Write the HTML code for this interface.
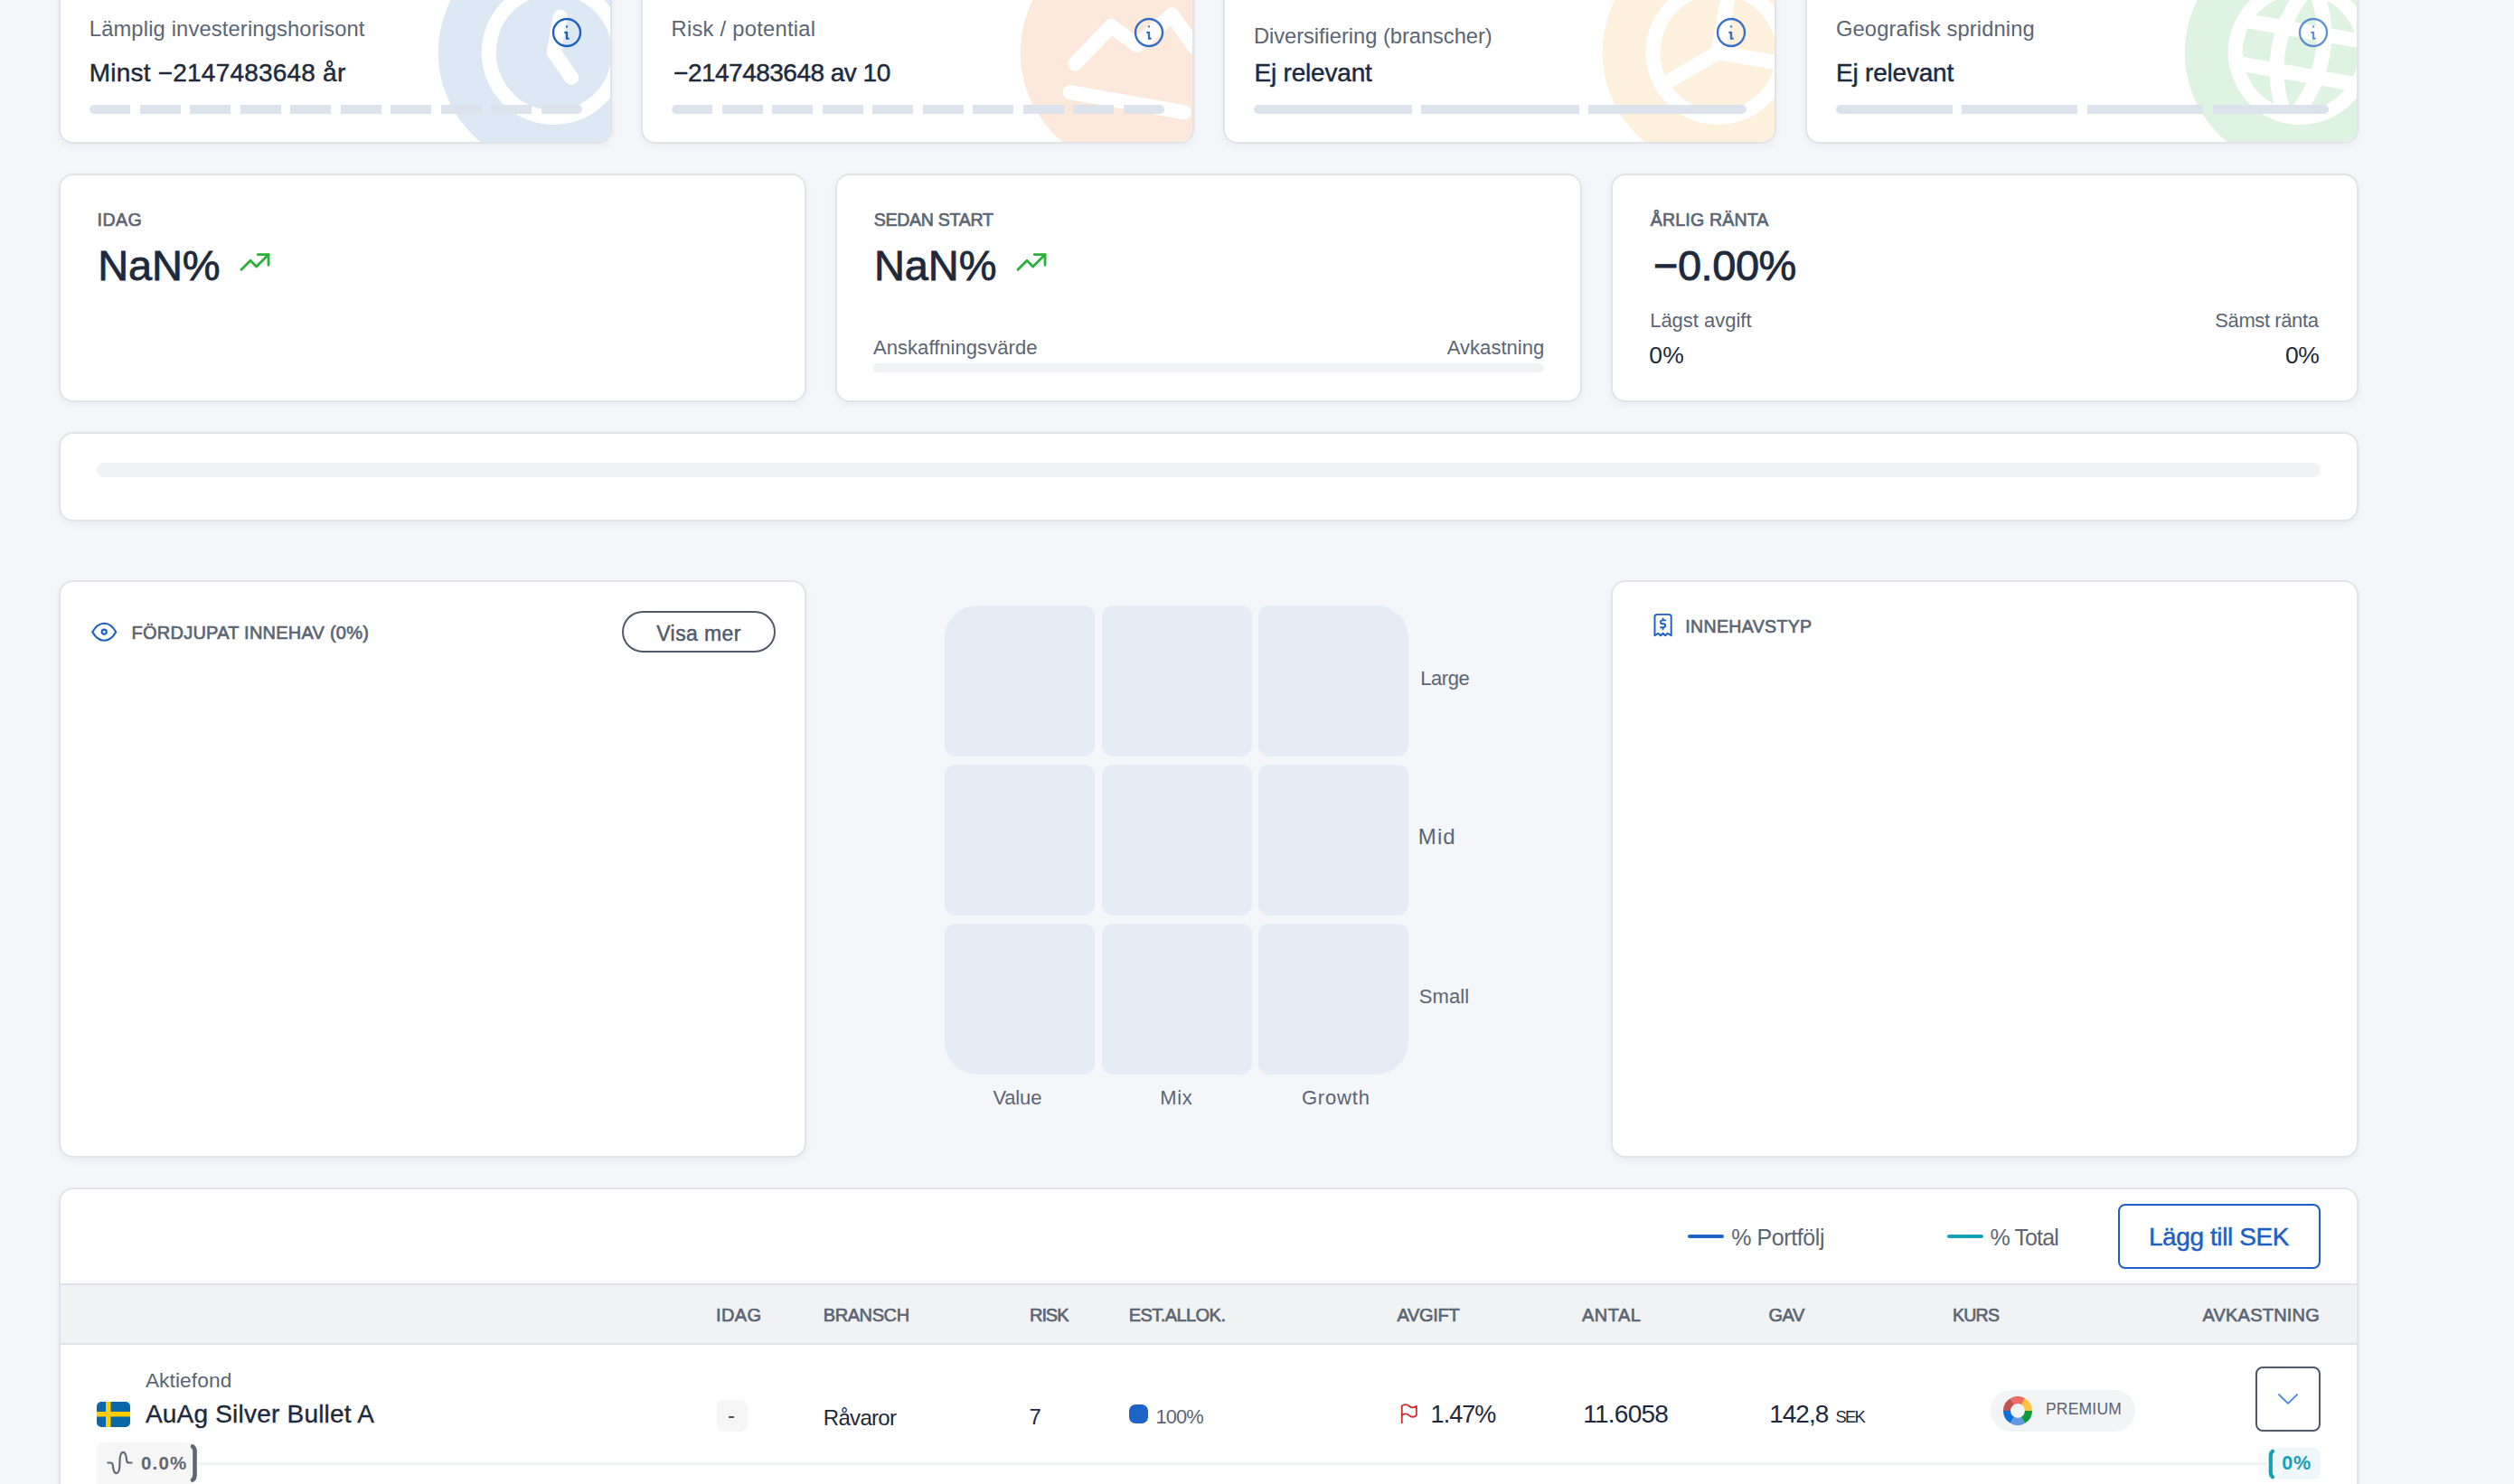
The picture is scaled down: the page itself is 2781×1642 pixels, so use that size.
<!DOCTYPE html>
<html><head><meta charset="utf-8"><style>
html,body{margin:0;padding:0;}
body{width:2781px;height:1642px;overflow:hidden;position:relative;background:#f4f6fa;font-family:"Liberation Sans",sans-serif;}
.t{position:absolute;line-height:1;white-space:nowrap;}
.b{position:absolute;}
.card{position:absolute;background:#fff;border:2px solid #e2e3e7;border-radius:16px;box-sizing:border-box;box-shadow:0 3px 9px rgba(30,45,70,0.05);}
.deco{position:absolute;left:-2px;top:-2px;}
</style></head><body>
<div class="card" style="left:65.00px;top:-30.00px;width:611.80px;height:189.10px;overflow:hidden"><svg class="deco" width="611.8" height="189.1" viewBox="0 0 611.8 189.1"><circle cx="547.7249999999999" cy="88" r="128" fill="#dde8f5"/><g transform="translate(547.7249999999999,88) rotate(10) scale(8) translate(-12,-12)" fill="none" stroke="#fff" stroke-width="2" stroke-linecap="round" stroke-linejoin="round"><circle cx="12" cy="12" r="9"/><path d="M12 7v5l3 3"/></g></svg></div>
<svg class="b" style="left:607.00px;top:15.80px;opacity:1.0" width="40" height="40" viewBox="0 0 24 24" fill="none" stroke="#1d5fc4" stroke-width="1.4" stroke-linecap="round" stroke-linejoin="round"><circle cx="12" cy="12" r="9"/><path d="M12 8.1h.01"/><path d="M11 12h1v4h1"/></svg>
<div class="b" style="left:99.3px;top:116px;width:45.02px;height:10.00px;background:#dde3ec;border-radius:5px 0 0 5px;"></div>
<div class="b" style="left:154.82px;top:116px;width:45.02px;height:10.00px;background:#dde3ec;"></div>
<div class="b" style="left:210.34px;top:116px;width:45.02px;height:10.00px;background:#dde3ec;"></div>
<div class="b" style="left:265.86px;top:116px;width:45.02px;height:10.00px;background:#dde3ec;"></div>
<div class="b" style="left:321.38px;top:116px;width:45.02px;height:10.00px;background:#dde3ec;"></div>
<div class="b" style="left:376.9px;top:116px;width:45.02px;height:10.00px;background:#dde3ec;"></div>
<div class="b" style="left:432.42px;top:116px;width:45.02px;height:10.00px;background:#dde3ec;"></div>
<div class="b" style="left:487.94px;top:116px;width:45.02px;height:10.00px;background:#dde3ec;"></div>
<div class="b" style="left:543.46px;top:116px;width:45.02px;height:10.00px;background:#dde3ec;"></div>
<div class="b" style="left:598.98px;top:116px;width:45.02px;height:10.00px;background:#dde3ec;border-radius:0 5px 5px 0;"></div>
<div class="card" style="left:709.00px;top:-30.00px;width:611.70px;height:189.10px;overflow:hidden"><svg class="deco" width="611.7" height="189.1" viewBox="0 0 611.7 189.1"><circle cx="547.625" cy="88" r="128" fill="#fde9dc"/><g transform="translate(547.625,88) rotate(10) scale(8) translate(-12,-12)" fill="none" stroke="#fff" stroke-width="2" stroke-linecap="round" stroke-linejoin="round"><path d="M4 19l16 0"/><path d="M4 15l4 -6l4 2l4 -5l4 4"/></g></svg></div>
<svg class="b" style="left:1250.80px;top:15.80px;opacity:0.9" width="40" height="40" viewBox="0 0 24 24" fill="none" stroke="#1d5fc4" stroke-width="1.4" stroke-linecap="round" stroke-linejoin="round"><circle cx="12" cy="12" r="9"/><path d="M12 8.1h.01"/><path d="M11 12h1v4h1"/></svg>
<div class="b" style="left:743.3px;top:116px;width:45.01px;height:10.00px;background:#dde3ec;border-radius:5px 0 0 5px;"></div>
<div class="b" style="left:798.81px;top:116px;width:45.01px;height:10.00px;background:#dde3ec;"></div>
<div class="b" style="left:854.32px;top:116px;width:45.01px;height:10.00px;background:#dde3ec;"></div>
<div class="b" style="left:909.83px;top:116px;width:45.01px;height:10.00px;background:#dde3ec;"></div>
<div class="b" style="left:965.34px;top:116px;width:45.01px;height:10.00px;background:#dde3ec;"></div>
<div class="b" style="left:1020.85px;top:116px;width:45.01px;height:10.00px;background:#dde3ec;"></div>
<div class="b" style="left:1076.36px;top:116px;width:45.01px;height:10.00px;background:#dde3ec;"></div>
<div class="b" style="left:1131.87px;top:116px;width:45.01px;height:10.00px;background:#dde3ec;"></div>
<div class="b" style="left:1187.38px;top:116px;width:45.01px;height:10.00px;background:#dde3ec;"></div>
<div class="b" style="left:1242.89px;top:116px;width:45.01px;height:10.00px;background:#dde3ec;border-radius:0 5px 5px 0;"></div>
<div class="card" style="left:1353.10px;top:-30.00px;width:611.70px;height:189.10px;overflow:hidden"><svg class="deco" width="611.7" height="189.1" viewBox="0 0 611.7 189.1"><circle cx="547.625" cy="88" r="128" fill="#fdf1dd"/><g transform="translate(547.625,88) rotate(10) scale(8) translate(-12,-12)" fill="none" stroke="#fff" stroke-width="2" stroke-linecap="round" stroke-linejoin="round"><circle cx="12" cy="12" r="9"/><path d="M12 12l-6.5 5.5"/><path d="M12 3v9h9"/></g></svg></div>
<svg class="b" style="left:1895.00px;top:15.80px;opacity:0.88" width="40" height="40" viewBox="0 0 24 24" fill="none" stroke="#1d5fc4" stroke-width="1.4" stroke-linecap="round" stroke-linejoin="round"><circle cx="12" cy="12" r="9"/><path d="M12 8.1h.01"/><path d="M11 12h1v4h1"/></svg>
<div class="b" style="left:1387.4px;top:116px;width:174.53px;height:10.00px;background:#dde3ec;border-radius:5px 0 0 5px;"></div>
<div class="b" style="left:1572.43px;top:116px;width:174.54px;height:10.00px;background:#dde3ec;"></div>
<div class="b" style="left:1757.47px;top:116px;width:174.53px;height:10.00px;background:#dde3ec;border-radius:0 5px 5px 0;"></div>
<div class="card" style="left:1997.00px;top:-30.00px;width:611.80px;height:189.10px;overflow:hidden"><svg class="deco" width="611.8" height="189.1" viewBox="0 0 611.8 189.1"><circle cx="547.7249999999999" cy="88" r="128" fill="#dff3e2"/><g transform="translate(547.7249999999999,88) rotate(10) scale(8) translate(-12,-12)" fill="none" stroke="#fff" stroke-width="2" stroke-linecap="round" stroke-linejoin="round"><circle cx="12" cy="12" r="9"/><path d="M3.6 9h16.8"/><path d="M3.6 15h16.8"/><path d="M11.5 3a17 17 0 0 0 0 18"/><path d="M12.5 3a17 17 0 0 1 0 18"/></g></svg></div>
<svg class="b" style="left:2539.00px;top:15.80px;opacity:0.68" width="40" height="40" viewBox="0 0 24 24" fill="none" stroke="#1d5fc4" stroke-width="1.4" stroke-linecap="round" stroke-linejoin="round"><circle cx="12" cy="12" r="9"/><path d="M12 8.1h.01"/><path d="M11 12h1v4h1"/></svg>
<div class="b" style="left:2031.3px;top:116px;width:128.30px;height:10.00px;background:#dde3ec;border-radius:5px 0 0 5px;"></div>
<div class="b" style="left:2170.1px;top:116px;width:128.30px;height:10.00px;background:#dde3ec;"></div>
<div class="b" style="left:2308.9px;top:116px;width:128.30px;height:10.00px;background:#dde3ec;"></div>
<div class="b" style="left:2447.7px;top:116px;width:128.30px;height:10.00px;background:#dde3ec;border-radius:0 5px 5px 0;"></div>
<div class="card" style="left:65.00px;top:192.10px;width:826.80px;height:252.80px;"></div>
<div class="card" style="left:924.00px;top:192.10px;width:825.80px;height:252.80px;"></div>
<div class="card" style="left:1782.00px;top:192.10px;width:826.80px;height:252.80px;"></div>
<svg class="b" style="left:262px;top:269.5px" width="40" height="40" viewBox="0 0 24 24" fill="none" stroke="#2bb03b" stroke-width="1.7" stroke-linecap="round" stroke-linejoin="round"><path d="M3 17l6 -6l4 4l8 -8"/><path d="M14 7l7 0l0 7"/></svg>
<svg class="b" style="left:1121px;top:269.5px" width="40" height="40" viewBox="0 0 24 24" fill="none" stroke="#2bb03b" stroke-width="1.7" stroke-linecap="round" stroke-linejoin="round"><path d="M3 17l6 -6l4 4l8 -8"/><path d="M14 7l7 0l0 7"/></svg>
<div class="b" style="left:966px;top:402px;width:742.00px;height:10.00px;background:#f1f2f4;border-radius:5px"></div>
<div class="card" style="left:65.00px;top:478.30px;width:2543.80px;height:99.10px;"></div>
<div class="b" style="left:107px;top:512px;width:2460.00px;height:16.00px;background:#f1f2f4;border-radius:8px"></div>
<div class="card" style="left:65.00px;top:641.90px;width:826.80px;height:639.60px;"></div>
<svg class="b" style="left:97.7px;top:681.8px" width="34.5" height="34.5" viewBox="0 0 24 24" fill="none" stroke="#1d5fc4" stroke-width="1.5" stroke-linecap="round" stroke-linejoin="round"><path d="M10.2 12a1.8 1.8 0 1 0 3.6 0a1.8 1.8 0 0 0 -3.6 0"/><path d="M21 12c-2.4 4.4 -5.4 6.6 -9 6.6c-3.6 0 -6.6 -2.2 -9 -6.6c2.4 -4.4 5.4 -6.6 9 -6.6c3.6 0 6.6 2.2 9 6.6"/></svg>
<div class="b" style="left:688px;top:676px;width:170.00px;height:46.00px;border:2.1px solid #4f5a69;border-radius:23px;box-sizing:border-box"></div>
<div class="b" style="left:1045px;top:670px;width:166.00px;height:167.00px;background:#e5ecf5;border-radius:36px 12px 12px 12px"></div>
<div class="b" style="left:1219px;top:670px;width:166.00px;height:167.00px;background:#e5ecf5;border-radius:12px 12px 12px 12px"></div>
<div class="b" style="left:1392px;top:670px;width:166.00px;height:167.00px;background:#e5ecf5;border-radius:12px 36px 12px 12px"></div>
<div class="b" style="left:1045px;top:846px;width:166.00px;height:167.00px;background:#e5ecf5;border-radius:12px 12px 12px 12px"></div>
<div class="b" style="left:1219px;top:846px;width:166.00px;height:167.00px;background:#e5ecf5;border-radius:12px 12px 12px 12px"></div>
<div class="b" style="left:1392px;top:846px;width:166.00px;height:167.00px;background:#e5ecf5;border-radius:12px 12px 12px 12px"></div>
<div class="b" style="left:1045px;top:1022px;width:166.00px;height:167.00px;background:#e5ecf5;border-radius:12px 12px 12px 36px"></div>
<div class="b" style="left:1219px;top:1022px;width:166.00px;height:167.00px;background:#e5ecf5;border-radius:12px 12px 12px 12px"></div>
<div class="b" style="left:1392px;top:1022px;width:166.00px;height:167.00px;background:#e5ecf5;border-radius:12px 12px 36px 12px"></div>
<div class="card" style="left:1782.00px;top:641.90px;width:826.80px;height:639.60px;"></div>
<svg class="b" style="left:1823.8px;top:676.2px" width="31.2" height="31.2" viewBox="0 0 24 24" fill="none" stroke="#1d5fc4" stroke-width="1.5" stroke-linecap="round" stroke-linejoin="round"><path d="M5 21v-16a2 2 0 0 1 2 -2h10a2 2 0 0 1 2 2v16l-3 -2l-2 2l-2 -2l-2 2l-2 -2l-3 2"/><path d="M14 8h-2.5a1.5 1.5 0 0 0 0 3h1a1.5 1.5 0 0 1 0 3h-2.5m2 0v1.5m0 -9v1.5"/></svg>
<div class="card" style="left:65.00px;top:1314.10px;width:2543.80px;height:435.90px;"></div>
<div class="b" style="left:1867px;top:1365.8px;width:40.00px;height:4.00px;background:#1d64c8;border-radius:2px"></div>
<div class="b" style="left:2154.3px;top:1365.8px;width:39.40px;height:4.00px;background:#17a2b8;border-radius:2px"></div>
<div class="b" style="left:2343px;top:1332px;width:224.00px;height:72.00px;border:2px solid #1d5fc4;border-radius:8px;box-sizing:border-box"></div>
<div class="b" style="left:66.75px;top:1419.9px;width:2540.30px;height:67.90px;background:#f1f2f4;border-top:2px solid #e0e2e5;border-bottom:2px solid #e0e2e5;box-sizing:border-box"></div>
<svg class="b" style="left:107px;top:1551px" width="37" height="28" viewBox="0 0 37 28"><defs><clipPath id="fc"><rect width="37" height="28" rx="5"/></clipPath></defs><g clip-path="url(#fc)"><rect width="37" height="28" fill="#0b67a8"/><rect x="10" width="5.5" height="28" fill="#fecc00"/><rect y="11" width="37" height="5.5" fill="#fecc00"/></g></svg>
<div class="b" style="left:793px;top:1549px;width:34.00px;height:35.00px;background:#f6f6f7;border-radius:8px"></div>
<div class="b" style="left:806.2px;top:1566.8px;width:6.00px;height:2.50px;background:#4b5563"></div>
<div class="b" style="left:1248.8px;top:1553.8px;width:21.20px;height:21.00px;background:#1d64c8;border-radius:7px"></div>
<svg class="b" style="left:1545.4px;top:1549.9px" width="27.6" height="27.6" viewBox="0 0 24 24" fill="none" stroke="#d42a2a" stroke-width="1.6" stroke-linecap="round" stroke-linejoin="round"><path d="M5 5a5 5 0 0 1 7 0a5 5 0 0 0 7 0v9a5 5 0 0 1 -7 0a5 5 0 0 0 -7 0v-9z"/><path d="M5 21v-7"/></svg>
<div class="b" style="left:2202px;top:1538px;width:160.00px;height:46.00px;background:#f3f4f6;border-radius:23px"></div>
<svg class="b" style="left:2216px;top:1545px" width="32" height="32" viewBox="0 0 32 32"><path d="M32.00 16.00A16 16 0 0 0 24.00 2.14L19.95 9.16A7.9 7.9 0 0 1 23.90 16.00Z" fill="#fcc43e"/><path d="M24.00 2.14A16 16 0 0 0 8.00 2.14L12.05 9.16A7.9 7.9 0 0 1 19.95 9.16Z" fill="#f06b63"/><path d="M8.00 2.14A16 16 0 0 0 0.00 16.00L8.10 16.00A7.9 7.9 0 0 1 12.05 9.16Z" fill="#c05550"/><path d="M0.00 16.00A16 16 0 0 0 8.00 29.86L12.05 22.84A7.9 7.9 0 0 1 8.10 16.00Z" fill="#0a6fd8"/><path d="M8.00 29.86A16 16 0 0 0 24.00 29.86L19.95 22.84A7.9 7.9 0 0 1 12.05 22.84Z" fill="#5f9ae0"/><path d="M24.00 29.86A16 16 0 0 0 32.00 16.00L23.90 16.00A7.9 7.9 0 0 1 19.95 22.84Z" fill="#0a9a3a"/></svg>
<div class="b" style="left:2495px;top:1512px;width:72.00px;height:72.00px;border:2.1px solid #4f5866;border-radius:8px;box-sizing:border-box"></div>
<svg class="b" style="left:2517px;top:1536px" width="28" height="24" viewBox="0 0 28 24" fill="none" stroke="#4a8ae0" stroke-width="2" stroke-linecap="round" stroke-linejoin="round"><path d="M4 7.1l10 9.8l10 -9.8"/></svg>
<div class="b" style="left:219px;top:1617.5px;width:2289.00px;height:3.30px;background:#f1f2f4"></div>
<div class="b" style="left:107px;top:1596px;width:106.50px;height:64.00px;background:#f6f6f7;border-radius:9px"></div>
<svg class="b" style="left:114.5px;top:1601.2px" width="35" height="35" viewBox="0 0 24 24" fill="none" stroke="#5f6775" stroke-width="1.5" stroke-linecap="round" stroke-linejoin="round"><path d="M21 12h-2c-.894 0 -1.662 -.857 -1.761 -2c-.296 -3.45 -.749 -6 -2.749 -6s-2.5 3.582 -2.5 8s-.5 8 -2.5 8s-2.452 -2.547 -2.749 -6c-.1 -1.147 -.867 -2 -1.763 -2h-2"/></svg>
<svg class="b" style="left:208px;top:1596px" width="14" height="46" viewBox="0 0 14 46" fill="none" stroke="#5f6775" stroke-width="4.6" stroke-linecap="round"><path d="M5 4.5Q7.5 6 7.5 10V36Q7.5 40 5 41.5"/></svg>
<div class="b" style="left:2511.6px;top:1602.2px;width:55.00px;height:34.50px;background:#eef8fb;border-radius:8px"></div>
<svg class="b" style="left:2503px;top:1600px" width="14" height="40" viewBox="0 0 14 40" fill="none" stroke="#17a0b5" stroke-width="4.2" stroke-linecap="round"><path d="M11 5.8Q8.8 7.3 8.8 11V29Q8.8 32.7 11 34.2"/></svg>
<div class="t" style="left:98.80px;top:20.94px;font-size:23.7px;color:#5b6573;letter-spacing:0.163px;font-weight:400;">Lämplig investeringshorisont</div>
<div class="t" style="left:98.80px;top:67.30px;font-size:28px;color:#1e293b;letter-spacing:0.211px;font-weight:400;-webkit-text-stroke:0.45px #1e293b;">Minst −2147483648 år</div>
<div class="t" style="left:742.50px;top:20.94px;font-size:23.7px;color:#5b6573;letter-spacing:0.280px;font-weight:400;">Risk / potential</div>
<div class="t" style="left:745.10px;top:67.30px;font-size:28px;color:#1e293b;letter-spacing:-0.512px;font-weight:400;-webkit-text-stroke:0.45px #1e293b;">−2147483648 av 10</div>
<div class="t" style="left:1386.90px;top:28.94px;font-size:23.7px;color:#5b6573;letter-spacing:-0.032px;font-weight:400;">Diversifiering (branscher)</div>
<div class="t" style="left:1387.50px;top:67.30px;font-size:28px;color:#1e293b;letter-spacing:-0.200px;font-weight:400;-webkit-text-stroke:0.45px #1e293b;">Ej relevant</div>
<div class="t" style="left:2031.00px;top:20.54px;font-size:23.7px;color:#5b6573;letter-spacing:0.127px;font-weight:400;">Geografisk spridning</div>
<div class="t" style="left:2031.10px;top:67.30px;font-size:28px;color:#1e293b;letter-spacing:-0.220px;font-weight:400;-webkit-text-stroke:0.45px #1e293b;">Ej relevant</div>
<div class="t" style="left:107.60px;top:234.21px;font-size:19.6px;color:#5b6573;letter-spacing:0.400px;font-weight:400;-webkit-text-stroke:0.65px #5b6573;">IDAG</div>
<div class="t" style="left:108.20px;top:269.92px;font-size:47px;color:#1e293b;letter-spacing:-0.134px;font-weight:400;-webkit-text-stroke:0.80px #1e293b;">NaN%</div>
<div class="t" style="left:966.70px;top:234.21px;font-size:19.6px;color:#5b6573;letter-spacing:-0.300px;font-weight:400;-webkit-text-stroke:0.65px #5b6573;">SEDAN START</div>
<div class="t" style="left:966.90px;top:269.92px;font-size:47px;color:#1e293b;letter-spacing:-0.066px;font-weight:400;-webkit-text-stroke:0.80px #1e293b;">NaN%</div>
<div class="t" style="left:966.00px;top:374.18px;font-size:22px;color:#5b6573;letter-spacing:0.050px;font-weight:400;">Anskaffningsvärde</div>
<div class="t" style="left:1600.70px;top:374.18px;font-size:22px;color:#5b6573;letter-spacing:0.045px;font-weight:400;">Avkastning</div>
<div class="t" style="left:1825.80px;top:234.21px;font-size:19.6px;color:#5b6573;letter-spacing:0.140px;font-weight:400;-webkit-text-stroke:0.65px #5b6573;">ÅRLIG RÄNTA</div>
<div class="t" style="left:1828.90px;top:269.92px;font-size:47px;color:#1e293b;letter-spacing:-0.440px;font-weight:400;-webkit-text-stroke:0.80px #1e293b;">−0.00%</div>
<div class="t" style="left:1825.20px;top:344.28px;font-size:22px;color:#5b6573;letter-spacing:-0.019px;font-weight:400;">Lägst avgift</div>
<div class="t" style="left:1824.30px;top:380.37px;font-size:26.5px;color:#1e293b;letter-spacing:0.200px;font-weight:400;">0%</div>
<div class="t" style="left:2450.30px;top:344.28px;font-size:22px;color:#5b6573;letter-spacing:-0.400px;font-weight:400;">Sämst ränta</div>
<div class="t" style="left:2528.00px;top:380.37px;font-size:26.5px;color:#1e293b;letter-spacing:-0.400px;font-weight:400;">0%</div>
<div class="t" style="left:145.60px;top:690.27px;font-size:20px;color:#5b6573;letter-spacing:0.228px;font-weight:400;-webkit-text-stroke:0.65px #5b6573;">FÖRDJUPAT INNEHAV (0%)</div>
<div class="t" style="left:726.30px;top:690.03px;font-size:23px;color:#4f5a69;letter-spacing:0.400px;font-weight:400;-webkit-text-stroke:0.45px #4f5a69;">Visa mer</div>
<div class="t" style="left:1571.30px;top:740.18px;font-size:22px;color:#5b6573;letter-spacing:-0.450px;font-weight:400;">Large</div>
<div class="t" style="left:1568.80px;top:914.29px;font-size:24px;color:#5b6573;letter-spacing:1.100px;font-weight:400;">Mid</div>
<div class="t" style="left:1569.80px;top:1092.38px;font-size:22px;color:#5b6573;letter-spacing:0.100px;font-weight:400;">Small</div>
<div class="t" style="left:1098.40px;top:1204.38px;font-size:22px;color:#5b6573;letter-spacing:-0.150px;font-weight:400;">Value</div>
<div class="t" style="left:1283.30px;top:1204.38px;font-size:22px;color:#5b6573;letter-spacing:0.600px;font-weight:400;">Mix</div>
<div class="t" style="left:1439.90px;top:1204.38px;font-size:22px;color:#5b6573;letter-spacing:0.840px;font-weight:400;">Growth</div>
<div class="t" style="left:1864.30px;top:684.21px;font-size:19.6px;color:#5b6573;letter-spacing:0.300px;font-weight:400;-webkit-text-stroke:0.65px #5b6573;">INNEHAVSTYP</div>
<div class="t" style="left:1915.20px;top:1357.14px;font-size:25px;color:#5b6573;letter-spacing:-0.400px;font-weight:400;">% Portfölj</div>
<div class="t" style="left:2201.60px;top:1357.14px;font-size:25px;color:#5b6573;letter-spacing:-0.900px;font-weight:400;">% Total</div>
<div class="t" style="left:2376.90px;top:1355.20px;font-size:28px;color:#1d5fc4;letter-spacing:-0.400px;font-weight:400;-webkit-text-stroke:0.45px #1d5fc4;">Lägg till SEK</div>
<div class="t" style="left:792.10px;top:1445.37px;font-size:20px;color:#5b6573;letter-spacing:0.333px;font-weight:400;-webkit-text-stroke:0.65px #5b6573;">IDAG</div>
<div class="t" style="left:910.70px;top:1445.37px;font-size:20px;color:#5b6573;letter-spacing:-0.400px;font-weight:400;-webkit-text-stroke:0.65px #5b6573;">BRANSCH</div>
<div class="t" style="left:1139.00px;top:1445.37px;font-size:20px;color:#5b6573;letter-spacing:-1.066px;font-weight:400;-webkit-text-stroke:0.65px #5b6573;">RISK</div>
<div class="t" style="left:1248.70px;top:1445.37px;font-size:20px;color:#5b6573;letter-spacing:-0.556px;font-weight:400;-webkit-text-stroke:0.65px #5b6573;">EST.ALLOK.</div>
<div class="t" style="left:1545.50px;top:1445.37px;font-size:20px;color:#5b6573;letter-spacing:-0.320px;font-weight:400;-webkit-text-stroke:0.65px #5b6573;">AVGIFT</div>
<div class="t" style="left:1750.00px;top:1445.37px;font-size:20px;color:#5b6573;letter-spacing:0.500px;font-weight:400;-webkit-text-stroke:0.65px #5b6573;">ANTAL</div>
<div class="t" style="left:1956.50px;top:1445.37px;font-size:20px;color:#5b6573;letter-spacing:-0.500px;font-weight:400;-webkit-text-stroke:0.65px #5b6573;">GAV</div>
<div class="t" style="left:2160.00px;top:1445.80px;font-size:19.5px;color:#5b6573;letter-spacing:-0.734px;font-weight:400;-webkit-text-stroke:0.65px #5b6573;">KURS</div>
<div class="t" style="left:2436.40px;top:1445.37px;font-size:20px;color:#5b6573;letter-spacing:0.222px;font-weight:400;-webkit-text-stroke:0.65px #5b6573;">AVKASTNING</div>
<div class="t" style="left:160.90px;top:1515.99px;font-size:22.7px;color:#5b6573;letter-spacing:0.100px;font-weight:400;">Aktiefond</div>
<div class="t" style="left:160.90px;top:1551.30px;font-size:28px;color:#1e293b;letter-spacing:0.211px;font-weight:400;-webkit-text-stroke:0.35px #1e293b;">AuAg Silver Bullet A</div>
<div class="t" style="left:910.80px;top:1556.89px;font-size:24px;color:#1e293b;letter-spacing:-0.700px;font-weight:400;">Råvaror</div>
<div class="t" style="left:1138.60px;top:1556.39px;font-size:24px;color:#1e293b;letter-spacing:0.000px;font-weight:400;">7</div>
<div class="t" style="left:1278.60px;top:1556.55px;font-size:21.8px;color:#5b6573;letter-spacing:-0.933px;font-weight:400;">100%</div>
<div class="t" style="left:1582.60px;top:1552.15px;font-size:27px;color:#1e293b;letter-spacing:-0.950px;font-weight:400;">1.47%</div>
<div class="t" style="left:1751.20px;top:1551.30px;font-size:28px;color:#1e293b;letter-spacing:-0.734px;font-weight:400;">11.6058</div>
<div class="t" style="left:1957.20px;top:1551.40px;font-size:28px;color:#1e293b;letter-spacing:-1.000px;font-weight:400;">142,8</div>
<div class="t" style="left:2030.40px;top:1559.34px;font-size:18.5px;color:#1e293b;letter-spacing:-1.800px;font-weight:400;">SEK</div>
<div class="t" style="left:2263.00px;top:1551.09px;font-size:17.5px;color:#5b6573;letter-spacing:0.200px;font-weight:400;">PREMIUM</div>
<div class="t" style="left:156.00px;top:1609.35px;font-size:20.5px;color:#5f6775;letter-spacing:1.200px;font-weight:700;">0.0%</div>
<div class="t" style="left:2524.20px;top:1609.00px;font-size:21.5px;color:#17a0b5;letter-spacing:0.800px;font-weight:700;">0%</div>
</body></html>
